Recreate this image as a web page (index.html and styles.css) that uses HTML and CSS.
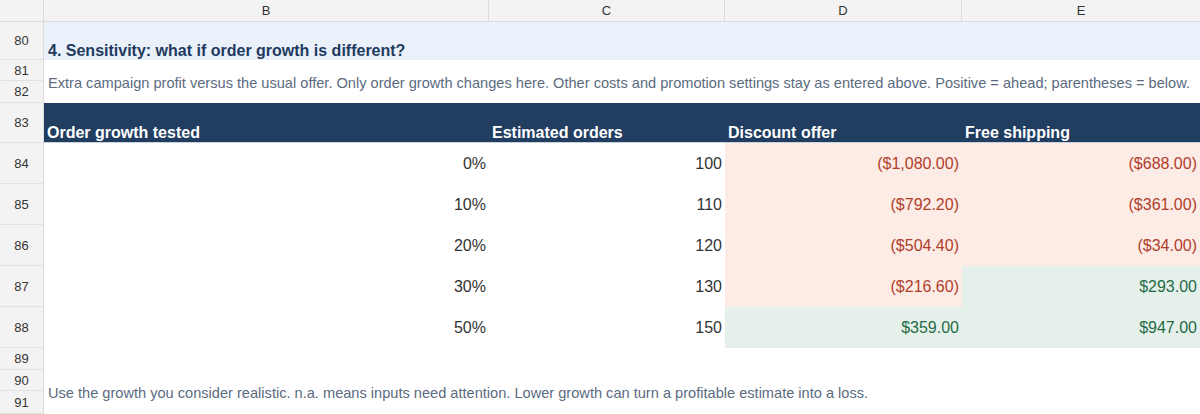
FILE: index.html
```html
<!DOCTYPE html>
<html>
<head>
<meta charset="utf-8">
<link rel="stylesheet" href="styles.css">
</head>
<body>
<div class="sheet">
  <div class="ch corner"></div>
  <div class="ch">B</div>
  <div class="ch">C</div>
  <div class="ch">D</div>
  <div class="ch last">E</div>

  <div class="rh r80">80</div>
  <div class="title span4">4. Sensitivity: what if order growth is different?</div>

  <div class="rh r81">81</div>
  <div class="note span4 rows2">Extra campaign profit versus the usual offer. Only order growth changes here. Other costs and promotion settings stay as entered above. Positive = ahead; parentheses = below.</div>
  <div class="rh r82">82</div>

  <div class="rh r83">83</div>
  <div class="th">Order growth tested</div>
  <div class="th">Estimated orders</div>
  <div class="th">Discount offer</div>
  <div class="th">Free shipping</div>

  <div class="rh rd">84</div>
  <div class="td">0%</div>
  <div class="td">100</div>
  <div class="td neg">($1,080.00)</div>
  <div class="td neg">($688.00)</div>

  <div class="rh rd">85</div>
  <div class="td">10%</div>
  <div class="td">110</div>
  <div class="td neg">($792.20)</div>
  <div class="td neg">($361.00)</div>

  <div class="rh rd">86</div>
  <div class="td">20%</div>
  <div class="td">120</div>
  <div class="td neg">($504.40)</div>
  <div class="td neg">($34.00)</div>

  <div class="rh rd">87</div>
  <div class="td">30%</div>
  <div class="td">130</div>
  <div class="td neg">($216.60)</div>
  <div class="td pos">$293.00</div>

  <div class="rh rd">88</div>
  <div class="td">50%</div>
  <div class="td">150</div>
  <div class="td pos">$359.00</div>
  <div class="td pos">$947.00</div>

  <div class="rh r89">89</div>
  <div class="blank span4"></div>

  <div class="rh r90">90</div>
  <div class="note footer span4 rows2">Use the growth you consider realistic. n.a. means inputs need attention. Lower growth can turn a profitable estimate into a loss.</div>
  <div class="rh r91">91</div>
</div>
</body>
</html>
```

FILE: styles.css
```css
* { box-sizing: border-box; }
html, body { margin: 0; padding: 0; background: #fff; }
body {
  font-family: "Liberation Sans", Arial, sans-serif;
  width: 1200px;
  height: 414px;
  overflow: hidden;
}
.sheet {
  display: grid;
  grid-template-columns: 44px 445px 236px 237px 238px;
  grid-template-rows: 22px 38px 21px 22px 40px 41px 41px 41px 41px 41px 22px 21px 23px;
}
.ch {
  background: #f3f3f3;
  border-right: 1px solid #dcdcdc;
  border-bottom: 1px solid #dcdcdc;
  color: #333;
  font-size: 13px;
  display: flex;
  align-items: center;
  justify-content: center;
}
.ch.last { border-right: none; }
.rh {
  background: #f3f3f3;
  border-right: 1px solid #dcdcdc;
  border-bottom: 1px solid #e2e2e2;
  color: #333;
  font-size: 13px;
  display: flex;
  align-items: center;
  justify-content: center;
}
.span4 { grid-column: span 4; }
.rows2 { grid-row: span 2; }
.title {
  background: #eaf1fa;
  color: #1f3a5f;
  font-weight: bold;
  font-size: 16px;
  display: flex;
  align-items: flex-end;
  padding: 0 0 0 4px;
}
.note {
  color: #5b6b80;
  font-size: 14.6px;
  display: flex;
  align-items: center;
  padding: 3px 0 0 4px;
  white-space: nowrap;
}
.footer { padding-top: 2px; }
.th {
  background: #213d60;
  color: #fff;
  font-weight: bold;
  font-size: 16px;
  display: flex;
  align-items: flex-end;
  padding: 0 0 0 3px;
  border-bottom: 1px solid #c9d3de;
}
.td {
  color: #333;
  font-size: 16px;
  display: flex;
  align-items: center;
  justify-content: flex-end;
  padding-right: 3px;
}
.neg { background: #fdebe5; color: #b0402c; }
.pos { background: #e6f0ea; color: #1f6b46; }
```
